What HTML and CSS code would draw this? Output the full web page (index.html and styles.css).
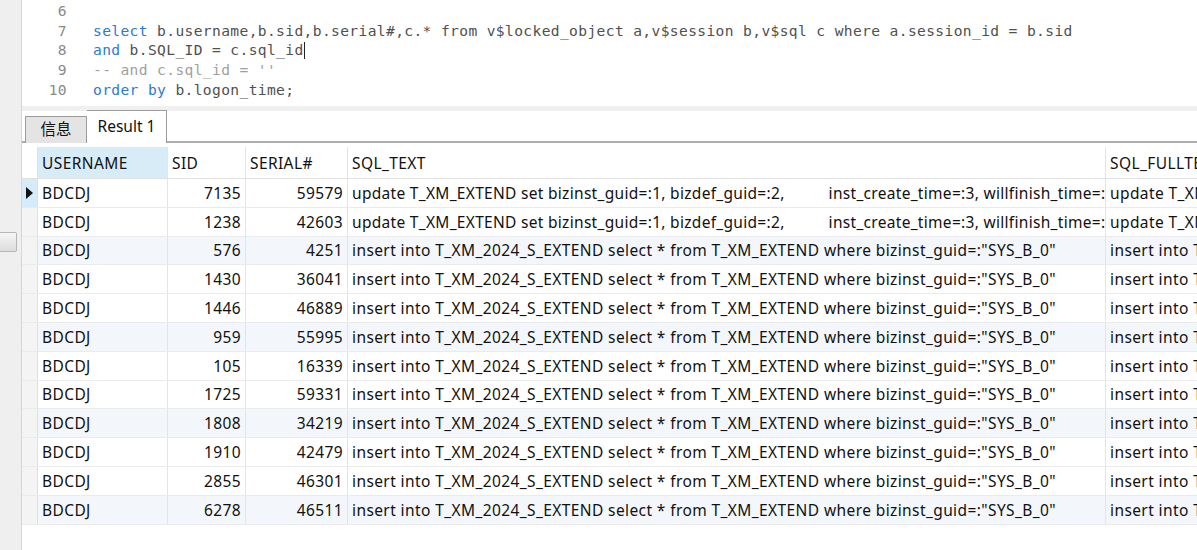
FILE: index.html
```html
<!DOCTYPE html>
<html>
<head>
<meta charset="utf-8">
<link rel="stylesheet" href="styles.css">
</head>
<body>
<div class="app">
  <div class="side"><div class="thumb"></div></div>
  <div class="main">
    <div class="editor">
      <div class="line"><span class="ln">6</span><span class="code"></span></div>
      <div class="line"><span class="ln">7</span><span class="code"><span class="kw">select</span> b.username,b.sid,b.serial#,c.* from v$locked_object a,v$session b,v$sql c where a.session_id = b.sid</span></div>
      <div class="line"><span class="ln">8</span><span class="code"><span class="kw">and</span> b.SQL_ID = c.sql_id<span class="caret"></span></span></div>
      <div class="line"><span class="ln">9</span><span class="code cm">-- and c.sql_id = ''</span></div>
      <div class="line"><span class="ln">10</span><span class="code"><span class="kw">order by</span> b.logon_time;</span></div>
    </div>
    <div class="sep"></div>
    <div class="tabs">
      <div class="tab">信息</div>
      <div class="tab active">Result 1</div>
    </div>
    <div class="grid">
      <div class="row head">
        <div class="c ind"></div>
        <div class="c user sel">USERNAME</div>
        <div class="c sid">SID</div>
        <div class="c serial">SERIAL#</div>
        <div class="c text">SQL_TEXT</div>
        <div class="c full">SQL_FULLTEXT</div>
      </div>
      <div class="row">
        <div class="c ind cur"><span class="arrow"></span></div>
        <div class="c user">BDCDJ</div><div class="c sid num">7135</div><div class="c serial num">59579</div>
        <div class="c text upd">update T_XM_EXTEND set bizinst_guid=:1, bizdef_guid=:2,<span class="tabgap"></span>inst_create_time=:3, willfinish_time=:</div>
        <div class="c full">update T_XM_EXTEND</div>
      </div>
      <div class="row">
        <div class="c ind"></div>
        <div class="c user">BDCDJ</div><div class="c sid num">1238</div><div class="c serial num">42603</div>
        <div class="c text upd">update T_XM_EXTEND set bizinst_guid=:1, bizdef_guid=:2,<span class="tabgap"></span>inst_create_time=:3, willfinish_time=:</div>
        <div class="c full">update T_XM_EXTEND</div>
      </div>
      <div class="row alt">
        <div class="c ind"></div>
        <div class="c user">BDCDJ</div><div class="c sid num">576</div><div class="c serial num">4251</div>
        <div class="c text">insert into T_XM_2024_S_EXTEND select * from T_XM_EXTEND where bizinst_guid=:"SYS_B_0"</div>
        <div class="c full">insert into T_XM_2024</div>
      </div>
      <div class="row">
        <div class="c ind"></div>
        <div class="c user">BDCDJ</div><div class="c sid num">1430</div><div class="c serial num">36041</div>
        <div class="c text">insert into T_XM_2024_S_EXTEND select * from T_XM_EXTEND where bizinst_guid=:"SYS_B_0"</div>
        <div class="c full">insert into T_XM_2024</div>
      </div>
      <div class="row">
        <div class="c ind"></div>
        <div class="c user">BDCDJ</div><div class="c sid num">1446</div><div class="c serial num">46889</div>
        <div class="c text">insert into T_XM_2024_S_EXTEND select * from T_XM_EXTEND where bizinst_guid=:"SYS_B_0"</div>
        <div class="c full">insert into T_XM_2024</div>
      </div>
      <div class="row alt">
        <div class="c ind"></div>
        <div class="c user">BDCDJ</div><div class="c sid num">959</div><div class="c serial num">55995</div>
        <div class="c text">insert into T_XM_2024_S_EXTEND select * from T_XM_EXTEND where bizinst_guid=:"SYS_B_0"</div>
        <div class="c full">insert into T_XM_2024</div>
      </div>
      <div class="row">
        <div class="c ind"></div>
        <div class="c user">BDCDJ</div><div class="c sid num">105</div><div class="c serial num">16339</div>
        <div class="c text">insert into T_XM_2024_S_EXTEND select * from T_XM_EXTEND where bizinst_guid=:"SYS_B_0"</div>
        <div class="c full">insert into T_XM_2024</div>
      </div>
      <div class="row">
        <div class="c ind"></div>
        <div class="c user">BDCDJ</div><div class="c sid num">1725</div><div class="c serial num">59331</div>
        <div class="c text">insert into T_XM_2024_S_EXTEND select * from T_XM_EXTEND where bizinst_guid=:"SYS_B_0"</div>
        <div class="c full">insert into T_XM_2024</div>
      </div>
      <div class="row alt">
        <div class="c ind"></div>
        <div class="c user">BDCDJ</div><div class="c sid num">1808</div><div class="c serial num">34219</div>
        <div class="c text">insert into T_XM_2024_S_EXTEND select * from T_XM_EXTEND where bizinst_guid=:"SYS_B_0"</div>
        <div class="c full">insert into T_XM_2024</div>
      </div>
      <div class="row">
        <div class="c ind"></div>
        <div class="c user">BDCDJ</div><div class="c sid num">1910</div><div class="c serial num">42479</div>
        <div class="c text">insert into T_XM_2024_S_EXTEND select * from T_XM_EXTEND where bizinst_guid=:"SYS_B_0"</div>
        <div class="c full">insert into T_XM_2024</div>
      </div>
      <div class="row">
        <div class="c ind"></div>
        <div class="c user">BDCDJ</div><div class="c sid num">2855</div><div class="c serial num">46301</div>
        <div class="c text">insert into T_XM_2024_S_EXTEND select * from T_XM_EXTEND where bizinst_guid=:"SYS_B_0"</div>
        <div class="c full">insert into T_XM_2024</div>
      </div>
      <div class="row alt">
        <div class="c ind"></div>
        <div class="c user">BDCDJ</div><div class="c sid num">6278</div><div class="c serial num">46511</div>
        <div class="c text">insert into T_XM_2024_S_EXTEND select * from T_XM_EXTEND where bizinst_guid=:"SYS_B_0"</div>
        <div class="c full">insert into T_XM_2024</div>
      </div>
    </div>
  </div>
</div>
</body>
</html>
```

FILE: styles.css
```css
html, body {
  margin: 0;
  padding: 0;
}
body {
  width: 1197px;
  height: 550px;
  overflow: hidden;
  background: #f0f0f0;
}
.app {
  display: flex;
  height: 550px;
}
.side {
  width: 22px;
  flex: none;
  background: #efefef;
  border-right: 1px solid #d6d6d6;
  box-sizing: border-box;
}
.thumb {
  margin-top: 232px;
  width: 17px;
  height: 20px;
  box-sizing: border-box;
  border: 1px solid #b5b5b5;
  border-left: none;
  border-radius: 0 2px 2px 0;
  background: linear-gradient(#f6f6f6, #dcdcdc);
}
.main {
  flex: 1;
  display: flex;
  flex-direction: column;
  background: #ffffff;
  min-width: 0;
}
.editor {
  height: 106px;
  box-sizing: border-box;
  padding-top: 1px;
  font-family: "DejaVu Sans Mono", "Liberation Mono", monospace;
  font-size: 14.6px;
  letter-spacing: 0.37px;
  color: #505050;
  background: #fff;
}
.line {
  display: flex;
  height: 19.7px;
  line-height: 19.7px;
  white-space: pre;
}
.ln {
  width: 45px;
  text-align: right;
  color: #8a8a8a;
  flex: none;
}
.code {
  margin-left: 26px;
}
.kw {
  color: #2b7ad6;
}
.cm {
  color: #a0a0a0;
}
.caret {
  display: inline-block;
  width: 1px;
  height: 17px;
  background: #222;
  vertical-align: -4px;
}
.sep {
  height: 5px;
  background: #f0f0f0;
  flex: none;
}
.tabs {
  height: 32px;
  flex: none;
  display: flex;
  align-items: flex-end;
  padding-left: 3px;
  box-sizing: border-box;
  border-bottom: 2px solid #aeaeae;
  background: #fff;
  font-family: "Noto Sans", "Noto Sans CJK SC", sans-serif;
  font-size: 15.5px;
  color: #111;
}
.tab {
  box-sizing: border-box;
  border: 1px solid #9c9c9c;
  border-bottom: none;
  background: #e4e4e4;
  margin-bottom: -2px;
  height: 27px;
  line-height: 25px;
  width: 62px;
  text-align: center;
}
.tab.active {
  width: 80px;
  height: 33px;
  line-height: 31px;
  background: #fff;
  border-left: none;
}
.grid {
  flex: 1;
  padding-top: 4px;
  font-family: "Noto Sans", "Noto Sans CJK SC", sans-serif;
  font-size: 15.5px;
  letter-spacing: 0.4px;
  color: #111;
  overflow: hidden;
}
.row {
  display: flex;
  height: 28.8px;
  border-bottom: 1px solid #ebebeb;
  box-sizing: border-box;
}
.row.head {
  height: 32px;
  border-bottom: 1px solid #e2e2e2;
  background: #fff;
}
.row.alt {
  background: #f3f7fb;
}
.c {
  flex: none;
  box-sizing: border-box;
  padding: 0 4px;
  border-right: 1px solid #e4e4e4;
  white-space: pre;
  overflow: hidden;
  display: flex;
  align-items: center;
}
.ind {
  width: 16px;
  padding: 0;
  background: #f4f4f4;
  border-right: 1px solid #e0e0e0;
  justify-content: center;
}
.row.head .ind {
  background: #fff;
}
.ind.cur {
  background: #d6ebf9;
}
.arrow {
  width: 0;
  height: 0;
  border-top: 6px solid transparent;
  border-bottom: 6px solid transparent;
  border-left: 7px solid #111;
}
.user { width: 130px; }
.sid { width: 78px; }
.serial { width: 102px; }
.text { width: 758px; }
.text.upd { letter-spacing: 0.3px; }
.full { width: 120px; border-right: none; }
.num { justify-content: flex-end; }
.sel { background: #d8ecf8; }
.tabgap {
  display: inline-block;
  width: 44px;
  flex: none;
}
```
